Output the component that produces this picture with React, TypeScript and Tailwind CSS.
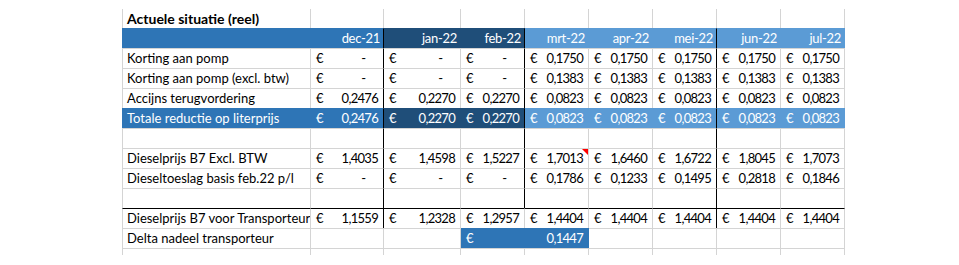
import React from "react";

type V = string | null; // "-" dash, string value, null empty

const MED = "bg-[#2e75b6] border-[#2e75b6] text-white";
const DARK = "bg-[#1f4e79] border-[#1f4e79] text-white";
const LIGHT = "bg-[#5b9bd5] border-[#5b9bd5] text-white";

const widths = [
  "w-[189px] border-l",
  "w-[73px]",
  "w-[77px]",
  "w-[64px]",
  "w-[64px]",
  "w-[64px]",
  "w-[64px]",
  "w-[64px]",
  "w-[64px]",
];

const colFill = (c: number) => (c <= 1 ? MED : c <= 3 ? DARK : LIGHT);

type Row = {
  label: string;
  values: V[];
  filled?: boolean;
  header?: boolean;
  topBlack?: boolean;
  blackCols: number[];
  comment?: number;
};

const rows: Row[] = [
  {
    label: "",
    header: true,
    filled: true,
    values: ["dec-21", "jan-22", "feb-22", "mrt-22", "apr-22", "mei-22", "jun-22", "jul-22"],
    blackCols: [1, 3, 6],
  },
  {
    label: "Korting aan pomp",
    values: ["-", "-", "-", "0,1750", "0,1750", "0,1750", "0,1750", "0,1750"],
    blackCols: [1, 3, 6],
  },
  {
    label: "Korting aan pomp (excl. btw)",
    values: ["-", "-", "-", "0,1383", "0,1383", "0,1383", "0,1383", "0,1383"],
    blackCols: [1, 3, 6],
  },
  {
    label: "Accijns terugvordering",
    values: ["0,2476", "0,2270", "0,2270", "0,0823", "0,0823", "0,0823", "0,0823", "0,0823"],
    blackCols: [1, 3, 6],
  },
  {
    label: "Totale reductie op literprijs",
    filled: true,
    values: ["0,2476", "0,2270", "0,2270", "0,0823", "0,0823", "0,0823", "0,0823", "0,0823"],
    blackCols: [1, 3, 6],
  },
  {
    label: "",
    values: [null, null, null, null, null, null, null, null],
    blackCols: [1, 3, 6],
  },
  {
    label: "Dieselprijs B7 Excl. BTW",
    values: ["1,4035", "1,4598", "1,5227", "1,7013", "1,6460", "1,6722", "1,8045", "1,7073"],
    blackCols: [1, 3, 6],
    comment: 4,
  },
  {
    label: "Dieseltoeslag basis feb.22 p/l",
    values: ["-", "-", "-", "0,1786", "0,1233", "0,1495", "0,2818", "0,1846"],
    blackCols: [1, 3, 6],
  },
  {
    label: "",
    values: [null, null, null, null, null, null, null, null],
    blackCols: [1, 3, 6],
  },
  {
    label: "Dieselprijs B7 voor Transporteur",
    topBlack: true,
    values: ["1,1559", "1,2328", "1,2957", "1,4404", "1,4404", "1,4404", "1,4404", "1,4404"],
    blackCols: [1, 6],
  },
];

function cellBorder(row: Row, c: number) {
  const fill = row.filled ? colFill(c) : "border-[#d4d4d4]";
  const rightBlack = row.blackCols.includes(c) ? "border-r-black" : "";
  const top = row.topBlack ? "border-t-black" : "";
  return `${fill} ${rightBlack} ${top}`;
}

function Acc({ v, header }: { v: V; header?: boolean }) {
  if (v === null) return null;
  if (header)
    return <div className="w-full text-right pr-[3px] tracking-[-0.3px]">{v}</div>;
  return (
    <div className="w-full flex justify-between pl-[5px]">
      <span>€</span>
      {v === "-" ? (
        <span className="pr-[17px]">-</span>
      ) : (
        <span className="pr-[5px] tracking-[-0.7px]">{v}</span>
      )}
    </div>
  );
}

export default function App() {
  return (
    <div className="bg-white w-[959px] h-[265px] pt-[9px] pl-[122px] font-['Lato',sans-serif] text-[13px] text-black overflow-hidden">
      {/* Title row */}
      <div className="flex">
        {widths.map((w, c) => (
          <div
            key={c}
            className={`${w} h-[19px] border-r border-[#d4d4d4] leading-[19px] whitespace-nowrap`}
          >
            {c === 0 && (
              <span className="pl-[4px] font-bold text-[14px]">Actuele situatie (reel)</span>
            )}
          </div>
        ))}
      </div>
      {rows.map((row, r) => (
        <div key={r} className="flex">
          {widths.map((w, c) => (
            <div
              key={c}
              className={`${w} relative h-[20px] border-t border-r ${cellBorder(row, c)} leading-[19px] whitespace-nowrap flex overflow-hidden`}
            >
              {c === 0 ? (
                <span className="pl-[4px]">{row.label}</span>
              ) : (
                <Acc v={row.values[c - 1]} header={row.header} />
              )}
              {row.comment === c && (
                <div className="absolute top-0 right-0 w-0 h-0 border-t-[6px] border-l-[6px] border-t-[#ff0000] border-l-transparent" />
              )}
            </div>
          ))}
        </div>
      ))}
      {/* Delta row */}
      <div className="flex">
        <div className="w-[189px] h-[20px] border-t border-r border-l border-[#d4d4d4] leading-[19px] whitespace-nowrap">
          <span className="pl-[4px]">Delta nadeel transporteur</span>
        </div>
        <div className="w-[73px] h-[20px] border-t border-r border-[#d4d4d4]" />
        <div className="w-[77px] h-[20px] border-t border-r border-[#d4d4d4]" />
        <div className={`w-[128px] h-[20px] border-t border-r ${MED} leading-[19px] flex`}>
          <Acc v="0,1447" />
        </div>
        {[0, 1, 2, 3].map((i) => (
          <div key={i} className="w-[64px] h-[20px] border-t border-r border-[#d4d4d4]" />
        ))}
      </div>
      {/* Tail gridlines */}
      <div className="flex">
        {widths.map((w, c) => (
          <div
            key={c}
            className={`${w} h-[7px] border-t border-r border-[#d4d4d4]`}
          />
        ))}
      </div>
    </div>
  );
}
